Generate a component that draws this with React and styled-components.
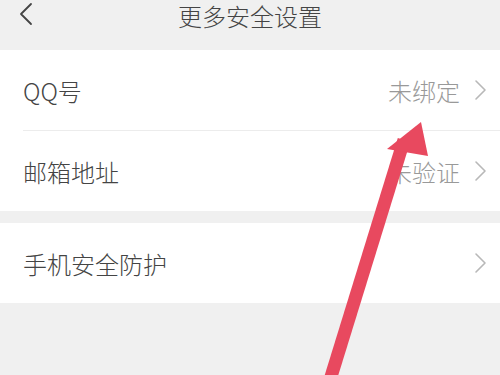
import React from "react";
import styled, { createGlobalStyle } from "styled-components";

const GlobalStyle = createGlobalStyle`
  html, body {
    margin: 0;
    padding: 0;
    background: #f0f0f0;
    font-family: "Noto Sans CJK SC", "Noto Sans", sans-serif;
  }
`;

const rows = [
  [
    { label: "QQ号", value: "未绑定" },
    { label: "邮箱地址", value: "未验证" },
  ],
  [{ label: "手机安全防护", value: "" }],
];

function Chevron({ left }) {
  return (
    <svg width="14" height="24" viewBox="0 0 14 24" fill="none">
      <path
        d={left ? "M12 2 L2 12 L12 22" : "M2 3 L11 12 L2 21"}
        stroke={left ? "#444" : "#b8b8b8"}
        strokeWidth={left ? 1.8 : 1.6}
        strokeLinecap="round"
        strokeLinejoin="round"
      />
    </svg>
  );
}

export default function App() {
  return (
    <Page>
      <GlobalStyle />
      <Header>
        <Back>
          <Chevron left />
        </Back>
        <Title>更多安全设置</Title>
      </Header>
      {rows.map((group, gi) => (
        <Group key={gi}>
          {group.map((row, ri) => (
            <Row key={row.label} $divider={ri > 0}>
              <Label>{row.label}</Label>
              <Value>{row.value}</Value>
              <Arrow>
                <Chevron />
              </Arrow>
            </Row>
          ))}
        </Group>
      ))}
      <Annotation width="500" height="375" viewBox="0 0 500 375">
        <line x1="404" y1="140" x2="330" y2="380" stroke="#e8495f" strokeWidth="13" />
        <polygon points="421,122 387,149 428,156" fill="#e8495f" />
      </Annotation>
    </Page>
  );
}

const Page = styled.div`
  position: relative;
  width: 500px;
  height: 375px;
  overflow: hidden;
  background: #f0f0f0;
`;

const Header = styled.div`
  height: 50px;
  display: flex;
  align-items: flex-start;
  justify-content: center;
  padding-top: 1px;
  box-sizing: border-box;
  position: relative;
`;

const Back = styled.div`
  position: absolute;
  left: 19px;
  top: 2px;
`;

const Title = styled.div`
  font-size: 24px;
  font-weight: 300;
  line-height: 30px;
  color: #444;
`;

const Group = styled.div`
  background: #fff;
  margin-bottom: 12px;
`;

const Row = styled.div`
  height: 80px;
  display: flex;
  align-items: center;
  padding: 0 12px 0 23px;
  position: relative;
  border-top: ${(p) => (p.$divider ? "1px solid #ececec" : "none")};
  margin-left: ${(p) => (p.$divider ? "23px" : "0")};
  padding-left: ${(p) => (p.$divider ? "0" : "23px")};
`;

const Label = styled.div`
  flex: 1;
  font-size: 24px;
  font-weight: 300;
  color: #444;
`;

const Value = styled.div`
  font-size: 24px;
  font-weight: 300;
  color: #999;
  margin-right: 14px;
`;

const Arrow = styled.div`
  display: flex;
  align-items: center;
`;

const Annotation = styled.svg`
  position: absolute;
  left: 0;
  top: 0;
  pointer-events: none;
`;
